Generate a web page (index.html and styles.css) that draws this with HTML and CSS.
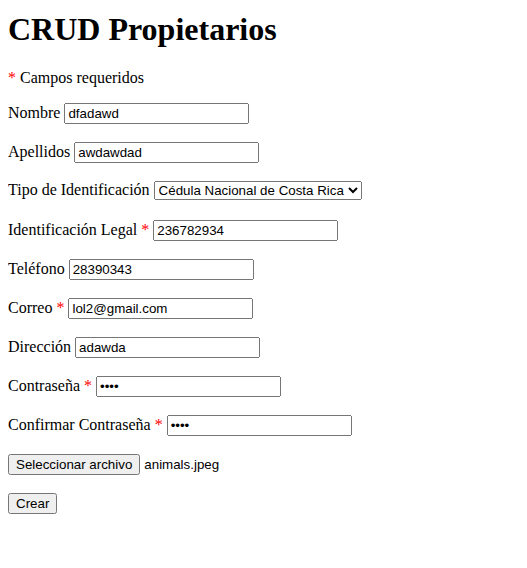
FILE: index.html
```html
<!DOCTYPE html>
<html lang="es">
<head>
<meta charset="utf-8">
<title>CRUD Propietarios</title>
<link rel="stylesheet" href="styles.css">
</head>
<body>
<h1 class="title">CRUD Propietarios</h1>
<p class="note"><span class="req">*</span> Campos requeridos</p>
<form class="form">
  <p class="row">Nombre <input class="field" type="text" value="dfadawd"></p>
  <p class="row">Apellidos <input class="field" type="text" value="awdawdad"></p>
  <p class="row">Tipo de Identificación <select class="field"><option>Cédula Nacional de Costa Rica</option></select></p>
  <p class="row">Identificación Legal <span class="req">*</span> <input class="field" type="text" value="236782934"></p>
  <p class="row">Teléfono <input class="field" type="text" value="28390343"></p>
  <p class="row">Correo <span class="req">*</span> <input class="field" type="text" value="lol2@gmail.com"></p>
  <p class="row">Dirección <input class="field" type="text" value="adawda"></p>
  <p class="row">Contraseña <span class="req">*</span> <input class="field" type="password" value="abcd"></p>
  <p class="row">Confirmar Contraseña <span class="req">*</span> <input class="field" type="password" value="abcd"></p>
  <p class="row"><button class="btn" type="button">Seleccionar archivo</button> <span class="filename">animals.jpeg</span></p>
  <p class="row"><button class="btn" type="button">Crear</button></p>
</form>
</body>
</html>
```

FILE: styles.css
```css
body {
  margin: 8px;
  padding-top: 3px;
  font-family: "Liberation Serif", "Times New Roman", serif;
  font-size: 16px;
  color: #000;
  background: #fff;
}
.title {
  font-size: 32px;
  font-weight: bold;
  margin: 0 0 21px;
}
.note {
  margin: 0 0 16px;
}
.form {
  margin: 0;
}
.row {
  margin: 0 0 16px;
  height: 23px;
}
.req {
  color: #f00;
}
.field, .btn, .filename {
  font-family: "Liberation Sans", Arial, sans-serif;
  font-size: 13.333px;
}
```
